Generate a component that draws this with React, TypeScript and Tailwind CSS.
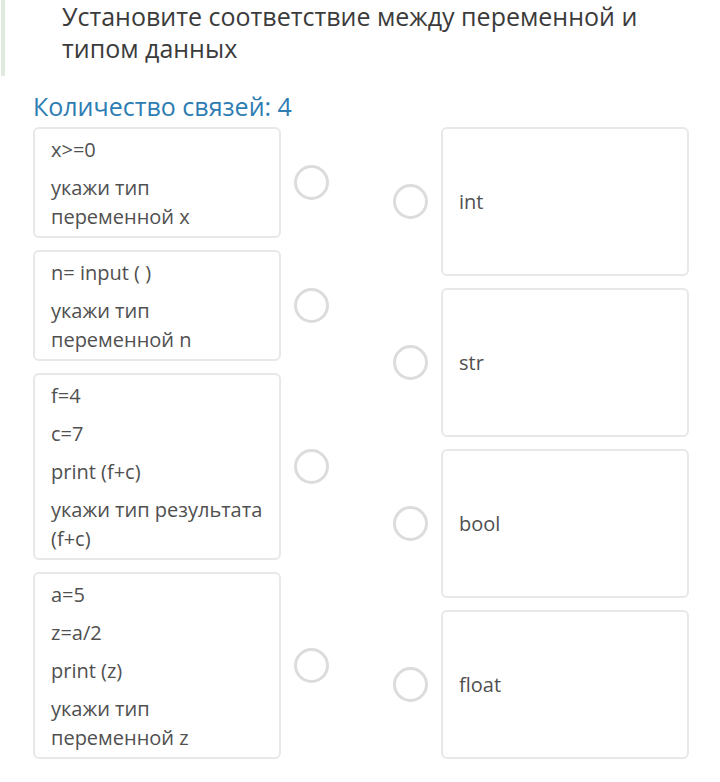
const LEFT: string[][] = [
  ["x>=0", "укажи тип\nпеременной x"],
  ["n= input ( )", "укажи тип\nпеременной n"],
  ["f=4", "c=7", "print (f+c)", "укажи тип результата\n(f+c)"],
  ["a=5", "z=a/2", "print (z)", "укажи тип\nпеременной z"],
];

const RIGHT = ["int", "str", "bool", "float"];

function Circle() {
  return <div className="h-[35px] w-[35px] shrink-0 rounded-full border-[3px] border-[#dcdcdc] bg-white" />;
}

export default function App() {
  return (
    <div
      className="relative min-h-[782px] w-[720px] bg-white text-[#444]"
      style={{ fontFamily: '"Open Sans", "Noto Sans", sans-serif' }}
    >
      <div className="absolute left-[1px] top-0 h-[76px] w-[4px] bg-[#dfe9df]" />
      <h1 className="pl-[62px] text-[25px] leading-[32px] text-[#3b3b3b]">
        Установите соответствие между переменной и
        <br />
        типом данных
      </h1>
      <div className="pl-[33px] pt-[27px] text-[25px] leading-[30px] text-[#2d7db3]">Количество связей: 4</div>
      <div className="flex pl-[33px] pt-[6px]">
        <div className="flex flex-col gap-[12px]">
          {LEFT.map((paras, i) => (
            <div key={i} className="flex items-center gap-[13px]">
              <div className="flex w-[248px] flex-col gap-[9px] rounded-[6px] border-2 border-[#e8e8e8] px-[16px] pb-[5px] pt-[6px] text-[20px] leading-[29px] text-[#505050]">
                {paras.map((p, j) => (
                  <p key={j} className="whitespace-pre-line">
                    {p}
                  </p>
                ))}
              </div>
              <Circle />
            </div>
          ))}
        </div>
        <div className="ml-[64px] flex flex-col gap-[12px]">
          {RIGHT.map((t) => (
            <div key={t} className="flex flex-1 items-center gap-[13px]">
              <Circle />
              <div className="flex h-full w-[248px] items-center rounded-[6px] border-2 border-[#e8e8e8] px-[16px] text-[20px] leading-[29px] text-[#505050]">
                {t}
              </div>
            </div>
          ))}
        </div>
      </div>
    </div>
  );
}
